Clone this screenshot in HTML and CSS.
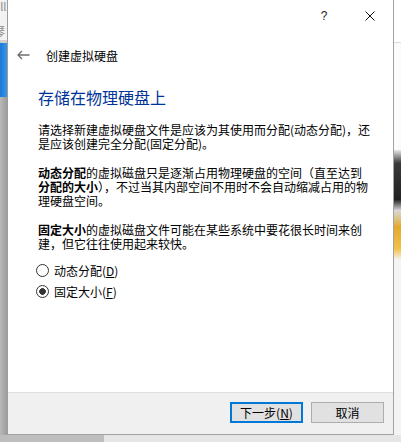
FILE: index.html
```html
<!DOCTYPE html>
<html lang="zh-CN">
<head>
  <meta charset="UTF-8">
  <meta name="viewport" content="width=device-width, initial-scale=1.0">
  <title>创建虚拟硬盘</title>
  <link rel="stylesheet" href="styles.css">
</head>
<body>
  <div class="desktop">
    <div class="row">
      <!-- 左边露出来的主窗口 -->
      <div class="side side-left">
        <div class="sl-top"><span>all</span><span>琴</span></div>
        <div class="sl-line"></div>
        <div class="sl-blue"></div>
        <div class="sl-gray"></div>
      </div>

      <div class="dialog">
        <div class="titlebar">
          <div class="capbtn help">?</div>
          <div class="capbtn close">
            <svg width="10" height="10" viewBox="0 0 10 10"><path d="M0.5 0.5 L9.5 9.5 M9.5 0.5 L0.5 9.5" stroke="#111" stroke-width="1" fill="none"/></svg>
          </div>
        </div>

        <div class="nav">
          <svg class="back" width="13" height="10" viewBox="0 0 13 10"><path d="M12.5 5 H1 M5 1 L1 5 L5 9" stroke="#6d6d6d" stroke-width="1.3" fill="none"/></svg>
          <span class="nav-title">创建虚拟硬盘</span>
        </div>

        <div class="content">
          <h2 class="heading">存储在物理硬盘上</h2>

          <p>请选择新建虚拟硬盘文件是应该为其使用而分配(动态分配)，还<br>是应该创建完全分配(固定分配)。</p>

          <p><b>动态分配</b>的虚拟磁盘只是逐渐占用物理硬盘的空间（直至达到<br><b>分配的大小</b>），不过当其内部空间不用时不会自动缩减占用的物<br>理硬盘空间。</p>

          <p><b>固定大小</b>的虚拟磁盘文件可能在某些系统中要花很长时间来创<br>建，但它往往使用起来较快。</p>

          <div class="options">
            <label class="opt"><input type="radio" name="alloc"><span>动态分配(<u>D</u>)</span></label>
            <label class="opt"><input type="radio" name="alloc" checked><span>固定大小(<u>F</u>)</span></label>
          </div>
        </div>

        <div class="footer">
          <button class="btn btn-default">下一步(<u>N</u>)</button>
          <button class="btn">取消</button>
        </div>
      </div>

      <!-- 右边露出来的窗口 -->
      <div class="side side-right">
        <div class="sr-top"></div>
        <div class="sr-line"></div>
        <div class="sr-mid"></div>
        <div class="sr-pic"></div>
        <div class="sr-rest"></div>
      </div>
    </div>
    <div class="bottom">
      <div class="bottom-dark"></div>
      <div class="bottom-light"></div>
    </div>
  </div>
</body>
</html>
```

FILE: styles.css
```css
* {
  box-sizing: border-box;
}
body {
  margin: 0;
  width: 401px;
  height: 442px;
  overflow: hidden;
  font-family: "Noto Sans CJK SC", "Microsoft YaHei", sans-serif;
  font-size: 12px;
  color: #000;
  background: #e4e4e4;
}
.desktop {
  display: flex;
  flex-direction: column;
  height: 442px;
}
.row {
  display: flex;
  height: 435px;
}

/* side strips */
.side {
  width: 7px;
  display: flex;
  flex-direction: column;
  overflow: hidden;
}
.sl-top {
  height: 40px;
  background: #f2f2f2;
  color: #8a8a8a;
  font-size: 11px;
  line-height: 13px;
  display: flex;
  flex-direction: column;
  gap: 12px;
}
.sl-top span {
  margin-left: -6px;
}
.sl-line {
  height: 3px;
  background: #cfcfcf;
}
.sl-blue {
  height: 54px;
  background: linear-gradient(to right, #1c78d6, #3b95e8);
}
.sl-gray {
  flex: 1;
  background: linear-gradient(to right, #b9b9b9, #9c9c9c);
}
.sr-top {
  height: 42px;
  background: #fff;
}
.sr-line {
  height: 1px;
  background: #dcdcdc;
}
.sr-mid {
  height: 107px;
  background: #fbfbfb;
}
.sr-pic {
  height: 110px;
  background: linear-gradient(to bottom, #e8e8e8 0%, #3a3a3a 12%, #222 45%, #d9d9d9 55%, #e3a92c 70%, #f2c14a 90%, #f6f6f6 100%);
}
.sr-rest {
  flex: 1;
  background: #f4f4f4;
}
.bottom {
  display: flex;
  height: 7px;
}
.bottom-dark {
  width: 104px;
  background: #bdbdbd;
}
.bottom-light {
  flex: 1;
  background: #e6e6e6;
}

/* dialog */
.dialog {
  width: 387px;
  background: #fff;
  border-left: 1px solid #9d9d9d;
  border-right: 1px solid #a3a3a3;
  border-bottom: 1px solid #a3a3a3;
  display: flex;
  flex-direction: column;
}
.titlebar {
  height: 31px;
  display: flex;
  justify-content: flex-end;
}
.capbtn {
  width: 46px;
  height: 31px;
  display: flex;
  align-items: center;
  justify-content: center;
}
.help {
  font-family: "Liberation Sans", Arial, sans-serif;
  font-size: 12px;
  color: #222;
}
.nav {
  height: 24px;
  margin-top: 12px;
  display: flex;
  align-items: center;
  padding-left: 9px;
}
.back {
  margin-right: 16px;
}
.content {
  flex: 1;
  padding-left: 30px;
}
.heading {
  margin: 20px 0 16px;
  font-size: 16px;
  line-height: 20px;
  font-weight: normal;
  color: #003399;
}
.content p {
  margin: 0 0 15px;
  line-height: 14px;
  white-space: nowrap;
}
.options {
  margin-top: -6px;
  display: flex;
  flex-direction: column;
}
.opt {
  height: 21px;
  display: flex;
  align-items: center;
  gap: 5px;
  margin-left: -2px;
}
.opt input {
  appearance: none;
  -webkit-appearance: none;
  width: 13px;
  height: 13px;
  margin: 0;
  border: 1px solid #333;
  border-radius: 50%;
  background: #fff;
}
.opt input:checked {
  background: radial-gradient(circle, #333 0 3px, #fff 3.6px);
}
u {
  text-decoration: underline;
  text-underline-offset: 1px;
}

/* footer */
.footer {
  height: 42px;
  background: #f0f0f0;
  border-top: 1px solid #dfdfdf;
  display: flex;
  justify-content: flex-end;
  align-items: flex-start;
  padding: 9px 9px 0 0;
  gap: 8px;
}
.btn {
  width: 73px;
  height: 21px;
  padding: 0;
  font-family: inherit;
  font-size: 12px;
  color: #000;
  background: #e1e1e1;
  border: 1px solid #adadad;
}
.btn-default {
  border: 2px solid #0078d7;
}
```
